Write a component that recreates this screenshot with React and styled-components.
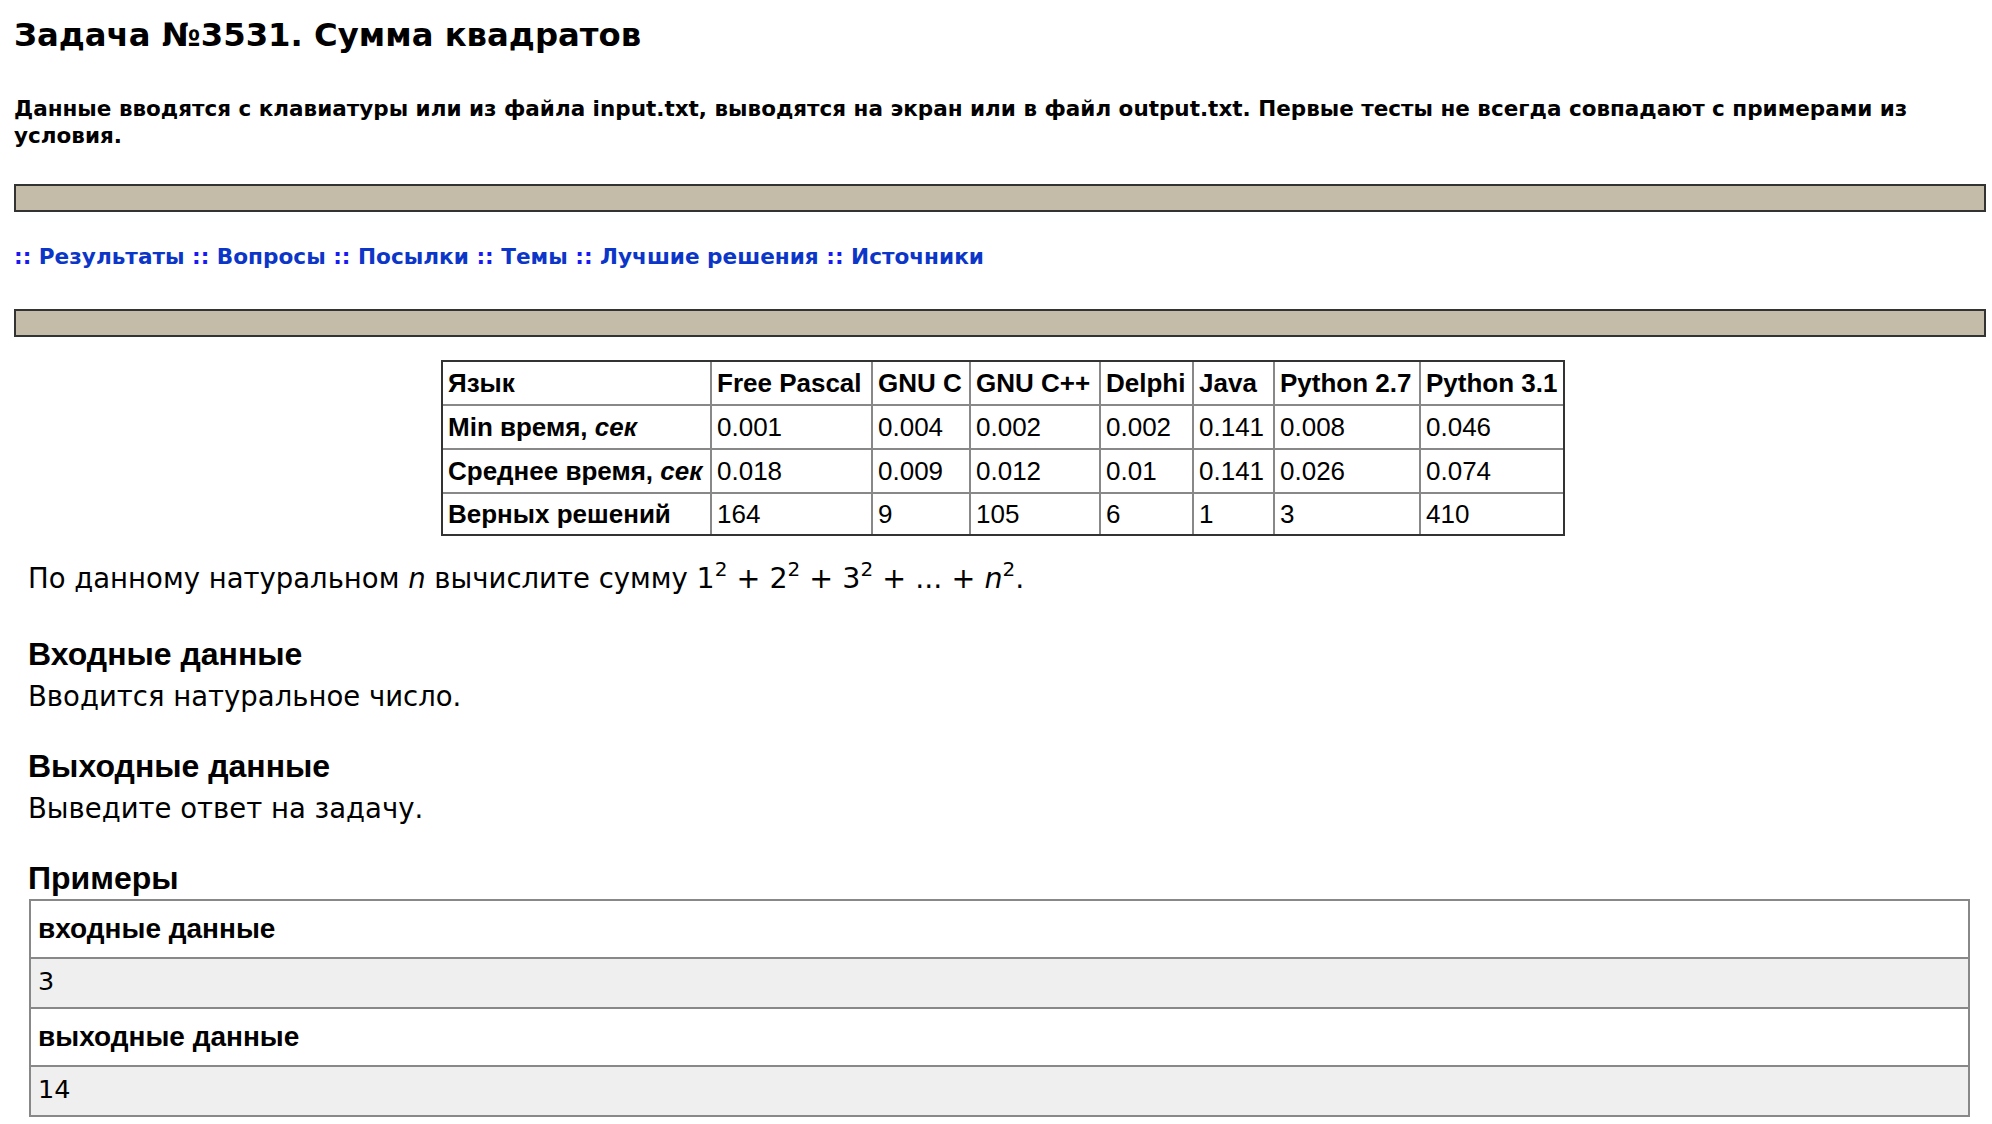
import styled, { createGlobalStyle } from "styled-components";

const GlobalStyle = createGlobalStyle`
    body {
        margin: 0;
        background: #ffffff;
        color: #000000;
        font-family: "DejaVu Sans", Verdana, sans-serif;
    }
`;

const Page = styled.div`
    padding: 15px 6px 0 14px;
`;

const Title = styled.h1`
    margin: 0;
    font-size: 32.3px;
    line-height: 40px;
    font-weight: 700;
`;

const Notice = styled.p`
    margin: 40px 0 0;
    font-size: 21.5px;
    line-height: 27px;
    font-weight: 700;
`;

// серая полоса над и под меню
const Bar = styled.div`
    height: 24px;
    margin-top: ${(p) => p.$top}px;
    border: 2px solid #333333;
    background: #c4bca8;
`;

const Nav = styled.div`
    margin-top: 30px;
    font-size: 21.6px;
    line-height: 30px;
    font-weight: 700;
`;

const Sep = styled.span`
    color: #1a1af0;
`;

const NavLink = styled.a`
    color: #0c36c8;
    text-decoration: none;
    cursor: pointer;
`;

const StatsWrap = styled.div`
    margin-top: 23px;
    padding-left: 6px;
`;

const StatsTable = styled.table`
    margin: 0 auto;
    width: 1124px;
    table-layout: fixed;
    border-collapse: separate;
    border-spacing: 0;
    border: 2px solid #333333;
    font-family: "Liberation Sans", Arial, sans-serif;
    font-size: 26px;

    tr:last-child td {
        border-bottom: none;
        height: 40px;
    }
    td:last-child {
        border-right: none;
    }
`;

const Cell = styled.td`
    box-sizing: border-box;
    width: ${(p) => (p.$w ? `${p.$w}px` : "auto")};
    height: 44px;
    padding: 0 5px;
    border-right: 2px solid #888888;
    border-bottom: 2px solid #888888;
    font-weight: ${(p) => (p.$bold ? 700 : 400)};
    white-space: nowrap;
    vertical-align: middle;
    text-align: left;
`;

const Statement = styled.p`
    margin: 25px 0 0 14px;
    font-size: 27.5px;
    line-height: 34px;
`;

const Formula = styled.span`
    font-size: 28.5px;

    sup {
        font-size: 20px;
        line-height: 0;
        vertical-align: 12px;
    }
`;

const SectionTitle = styled.h3`
    margin: ${(p) => p.$top}px 0 0 14px;
    font-family: "Liberation Sans", Arial, sans-serif;
    font-size: 32px;
    line-height: 34px;
    font-weight: 700;
`;

const SectionText = styled.p`
    margin: 8px 0 0 14px;
    font-size: 27.5px;
    line-height: 34px;
`;

const Samples = styled.div`
    margin: 4px 16px 0 15px;
    border: 2px solid #888888;
`;

const SampleRow = styled.div`
    display: flex;
    align-items: center;
    box-sizing: border-box;
    height: ${(p) => (p.$head ? 58 : 50)}px;
    padding: 0 7px ${(p) => (p.$head ? 0 : 4)}px;
    border-top: ${(p) => (p.$first ? "none" : "2px solid #888888")};
    background: ${(p) => (p.$head ? "#ffffff" : "#efefef")};
    font-family: ${(p) =>
        p.$head ? `"Liberation Sans", Arial, sans-serif` : `"DejaVu Sans", Verdana, sans-serif`};
    font-size: ${(p) => (p.$head ? 28 : 25.5)}px;
    font-weight: ${(p) => (p.$head ? 700 : 400)};

    &:first-child {
        height: 56px;
    }
`;

const langs = [
    { name: "Язык", w: 269 },
    { name: "Free Pascal", w: 161 },
    { name: "GNU C", w: 98 },
    { name: "GNU C++", w: 130 },
    { name: "Delphi", w: 93 },
    { name: "Java", w: 81 },
    { name: "Python 2.7", w: 146 },
    { name: "Python 3.1", w: 142 },
];

const rows = [
    { label: "Min время, ", values: ["0.001", "0.004", "0.002", "0.002", "0.141", "0.008", "0.046"] },
    { label: "Среднее время, ", values: ["0.018", "0.009", "0.012", "0.01", "0.141", "0.026", "0.074"] },
    { label: "Верных решений", values: ["164", "9", "105", "6", "1", "3", "410"], plain: true },
];

const menu = ["Результаты", "Вопросы", "Посылки", "Темы", "Лучшие решения", "Источники"];

function App() {
    return (
        <Page>
            <GlobalStyle />
            <Title>Задача №3531. Сумма квадратов</Title>
            <Notice>
                Данные вводятся с клавиатуры или из файла input.txt, выводятся на экран или в файл output.txt.
                Первые тесты не всегда совпадают с примерами из условия.
            </Notice>

            <Bar $top={35} />
            <Nav>
                {menu.map((item) => (
                    <span key={item}>
                        <Sep>:: </Sep>
                        <NavLink>{item}</NavLink>{" "}
                    </span>
                ))}
            </Nav>
            <Bar $top={37} />

            <StatsWrap>
                <StatsTable>
                    <tbody>
                        <tr>
                            {langs.map((l) => (
                                <Cell key={l.name} $w={l.w} $bold>
                                    {l.name}
                                </Cell>
                            ))}
                        </tr>
                        {rows.map((r) => (
                            <tr key={r.label}>
                                <Cell $bold>
                                    {r.label}
                                    {!r.plain && <i>сек</i>}
                                </Cell>
                                {r.values.map((v, i) => (
                                    <Cell key={i}>{v}</Cell>
                                ))}
                            </tr>
                        ))}
                    </tbody>
                </StatsTable>
            </StatsWrap>

            <Statement>
                По данному натуральном <i>n</i> вычислите сумму{" "}
                <Formula>
                    1<sup>2</sup> + 2<sup>2</sup> + 3<sup>2</sup> + ... + <i>n</i>
                    <sup>2</sup>.
                </Formula>
            </Statement>

            <SectionTitle $top={41}>Входные данные</SectionTitle>
            <SectionText>Вводится натуральное число.</SectionText>

            <SectionTitle $top={36}>Выходные данные</SectionTitle>
            <SectionText>Выведите ответ на задачу.</SectionText>

            <SectionTitle $top={36}>Примеры</SectionTitle>
            <Samples>
                <SampleRow $head $first>
                    входные данные
                </SampleRow>
                <SampleRow>3</SampleRow>
                <SampleRow $head>выходные данные</SampleRow>
                <SampleRow>14</SampleRow>
            </Samples>
        </Page>
    );
}

export default App;
